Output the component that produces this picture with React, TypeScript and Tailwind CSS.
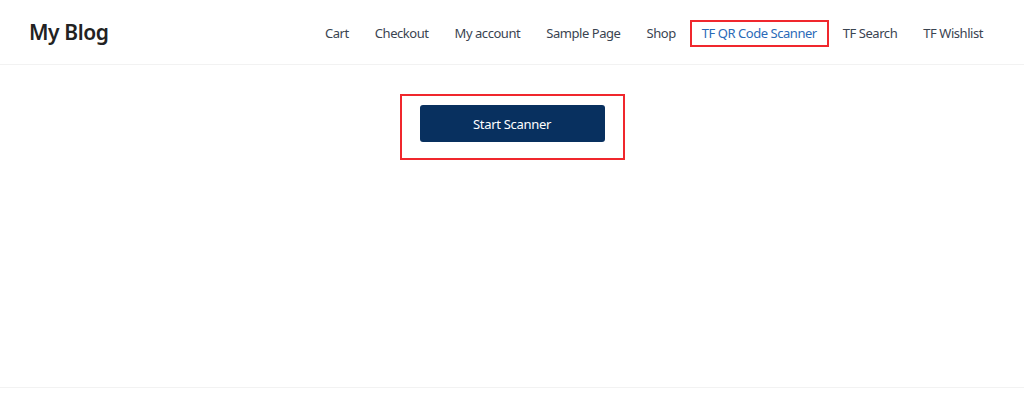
export default function App() {
  const links = [
    "Cart",
    "Checkout",
    "My account",
    "Sample Page",
    "Shop",
    "TF QR Code Scanner",
    "TF Search",
    "TF Wishlist",
  ];

  return (
    <div className="min-h-[410px] bg-white font-['Noto_Sans',sans-serif] text-[#333]">
      <header className="flex h-[65px] items-center justify-between border-b border-[#f2f2f2] pl-[29px] pr-[41px]">
        <a className="pt-[1px] text-[21px] font-semibold tracking-[-0.4px] text-[#222]">My Blog</a>
        <nav className="flex items-center gap-[26px] pt-[3px] text-[13px] tracking-[-0.45px] text-[#3a4451]">
          {links.map((l) =>
            l === "TF QR Code Scanner" ? (
              <a
                key={l}
                className="-mx-[12px] border-2 border-[#f0272d] px-[10px] py-[2px] text-[#2a6ab8]"
              >
                {l}
              </a>
            ) : (
              <a key={l}>{l}</a>
            )
          )}
        </nav>
      </header>

      <main className="flex h-[323px] justify-center border-b border-[#f2f2f2] pt-[29px]">
        <div className="h-[66px] border-2 border-[#f0272d] px-[18px] pt-[9px]">
          <button className="h-[37px] w-[185px] rounded-[3px] bg-[#08305f] pt-[3px] text-[13px] tracking-[-0.3px] text-white">
            Start Scanner
          </button>
        </div>
      </main>
    </div>
  );
}
